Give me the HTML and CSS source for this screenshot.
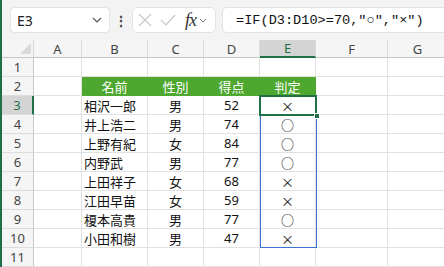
FILE: index.html
```html
<!DOCTYPE html>
<html lang="ja">
<head>
    <meta charset="utf-8">
    <title>IF 判定</title>
    <link rel="stylesheet" href="styles.css">
</head>
<body>
    <div class="window">
        <div class="toolbar">
            <div class="name-box">
                <span>E3</span>
                <svg class="chev" width="10" height="6" viewBox="0 0 10 6"><path d="M1 1l4 4 4-4" fill="none" stroke="#555" stroke-width="1.2"/></svg>
            </div>
            <div class="dots">⋮</div>
            <div class="fx-box">
                <svg width="14" height="14" viewBox="0 0 14 14"><path d="M1 1l12 12M13 1L1 13" stroke="#c8c8c8" stroke-width="1.2"/></svg>
                <svg width="16" height="14" viewBox="0 0 16 14"><path d="M1 7l5 5L15 2" fill="none" stroke="#c8c8c8" stroke-width="1.2"/></svg>
                <span class="fx">fx</span>
                <svg width="8" height="5" viewBox="0 0 8 5"><path d="M1 1l3 3 3-3" fill="none" stroke="#777" stroke-width="1"/></svg>
            </div>
            <div class="formula">=IF(D3:D10&gt;=70,"○","×")</div>
        </div>

        <div class="sheet">
            <div class="corner"><span class="tri"></span></div>
            <div class="col-h">A</div>
            <div class="col-h">B</div>
            <div class="col-h">C</div>
            <div class="col-h">D</div>
            <div class="col-h active">E</div>
            <div class="col-h">F</div>
            <div class="col-h">G</div>

            <div class="row-h">1</div>
            <div class="cell"></div><div class="cell"></div><div class="cell"></div><div class="cell"></div><div class="cell"></div><div class="cell"></div><div class="cell"></div>

            <div class="row-h">2</div>
            <div class="cell"></div>
            <div class="cell head">名前</div>
            <div class="cell head">性別</div>
            <div class="cell head">得点</div>
            <div class="cell head">判定</div>
            <div class="cell"></div><div class="cell"></div>

            <div class="row-h active">3</div>
            <div class="cell"></div>
            <div class="cell name">相沢一郎</div>
            <div class="cell mid">男</div>
            <div class="cell mid">52</div>
            <div class="cell mid mark selected">×<span class="spill"></span><span class="frame"><span class="handle"></span></span></div>
            <div class="cell"></div><div class="cell"></div>

            <div class="row-h">4</div>
            <div class="cell"></div>
            <div class="cell name">井上浩二</div>
            <div class="cell mid">男</div>
            <div class="cell mid">74</div>
            <div class="cell mid mark">○</div>
            <div class="cell"></div><div class="cell"></div>

            <div class="row-h">5</div>
            <div class="cell"></div>
            <div class="cell name">上野有紀</div>
            <div class="cell mid">女</div>
            <div class="cell mid">84</div>
            <div class="cell mid mark">○</div>
            <div class="cell"></div><div class="cell"></div>

            <div class="row-h">6</div>
            <div class="cell"></div>
            <div class="cell name">内野武</div>
            <div class="cell mid">男</div>
            <div class="cell mid">77</div>
            <div class="cell mid mark">○</div>
            <div class="cell"></div><div class="cell"></div>

            <div class="row-h">7</div>
            <div class="cell"></div>
            <div class="cell name">上田祥子</div>
            <div class="cell mid">女</div>
            <div class="cell mid">68</div>
            <div class="cell mid mark">×</div>
            <div class="cell"></div><div class="cell"></div>

            <div class="row-h">8</div>
            <div class="cell"></div>
            <div class="cell name">江田早苗</div>
            <div class="cell mid">女</div>
            <div class="cell mid">59</div>
            <div class="cell mid mark">×</div>
            <div class="cell"></div><div class="cell"></div>

            <div class="row-h">9</div>
            <div class="cell"></div>
            <div class="cell name">榎本高貴</div>
            <div class="cell mid">男</div>
            <div class="cell mid">77</div>
            <div class="cell mid mark">○</div>
            <div class="cell"></div><div class="cell"></div>

            <div class="row-h">10</div>
            <div class="cell"></div>
            <div class="cell name">小田和樹</div>
            <div class="cell mid">男</div>
            <div class="cell mid">47</div>
            <div class="cell mid mark">×</div>
            <div class="cell"></div><div class="cell"></div>

            <div class="row-h">11</div>
            <div class="cell"></div><div class="cell"></div><div class="cell"></div><div class="cell"></div><div class="cell"></div><div class="cell"></div><div class="cell"></div>
        </div>
    </div>
</body>
</html>
```

FILE: styles.css
```css
* {
    margin: 0;
    padding: 0;
    box-sizing: border-box;
}

body {
    width: 444px;
    height: 267px;
    overflow: hidden;
    background: #ffffff;
    font-family: "Noto Sans", "Noto Sans CJK JP", sans-serif;
    color: #222;
}

.window {
    border-left: 2px solid #1e7145;
    height: 267px;
    overflow: hidden;
}

/* formula bar */
.toolbar {
    height: 40px;
    background: #f3f3f3;
    display: flex;
    align-items: center;
    padding-left: 8px;
}

.name-box {
    width: 100px;
    height: 26px;
    background: #fff;
    border: 1px solid #e3e3e3;
    border-radius: 5px;
    display: flex;
    align-items: center;
    justify-content: space-between;
    padding: 0 7px 0 6px;
    font-size: 14px;
    color: #222;
}

.dots {
    width: 22px;
    text-align: center;
    font-size: 14px;
    color: #444;
    font-weight: bold;
}

.fx-box {
    width: 84px;
    height: 26px;
    background: #fff;
    border: 1px solid #e3e3e3;
    border-radius: 5px;
    display: flex;
    align-items: center;
    gap: 8px;
    padding: 0 4px 0 5px;
}

.fx {
    font-family: "Liberation Serif", serif;
    font-style: italic;
    font-size: 18px;
    color: #333;
    margin-left: 1px;
    margin-right: -5px;
    letter-spacing: -1px;
}

.formula {
    flex: 1;
    height: 26px;
    margin-left: 6px;
    background: #fff;
    border: 1px solid #e3e3e3;
    border-right: none;
    border-radius: 5px 0 0 5px;
    display: flex;
    align-items: center;
    padding-left: 13px;
    font-family: "Liberation Mono", monospace;
    font-size: 13.6px;
    color: #111;
    white-space: nowrap;
}

/* grid */
.sheet {
    display: grid;
    grid-template-columns: 32px 48px 66px 56px 56px 56px 72px 60px;
    grid-template-rows: 18px repeat(11, 19px);
    font-size: 13px;
}

.corner {
    background: #f5f5f5;
    border-right: 1px solid #d6d6d6;
    border-bottom: 1px solid #c8c8c8;
    position: relative;
}

.tri {
    position: absolute;
    right: 2px;
    bottom: 3px;
    width: 0;
    height: 0;
    border-left: 11px solid transparent;
    border-bottom: 11px solid #dadada;
}

.col-h {
    background: #f5f5f5;
    border-right: 1px solid #dcdcdc;
    border-bottom: 1px solid #c8c8c8;
    display: flex;
    align-items: center;
    justify-content: center;
    color: #444;
    font-size: 13px;
}

.col-h.active {
    background: #d4d4d4;
    color: #1e7145;
    border-bottom: 2px solid #1e7145;
}

.row-h {
    background: #f5f5f5;
    border-right: 1px solid #c8c8c8;
    border-bottom: 1px solid #dcdcdc;
    display: flex;
    align-items: center;
    justify-content: center;
    color: #444;
    font-size: 13px;
}

.row-h.active {
    background: #d4d4d4;
    color: #1e7145;
    border-right: 2px solid #1e7145;
}

.cell {
    border-right: 1px solid #e1e1e1;
    border-bottom: 1px solid #e1e1e1;
    display: flex;
    align-items: center;
    white-space: nowrap;
    color: #111;
}

.cell.head {
    background: #4ea72e;
    border-color: #4ea72e;
    color: #fff;
    justify-content: center;
}

.cell.name {
    padding-left: 2px;
}

.cell.mid {
    justify-content: center;
}

.mark {
    font-family: "Noto Sans CJK JP", sans-serif;
    font-size: 13px;
}

.selected {
    position: relative;
}

.spill {
    position: absolute;
    left: 0;
    top: -1px;
    width: 57px;
    height: 153px;
    border: 1px solid #3a73d0;
}

.frame {
    position: absolute;
    left: -1px;
    top: -1px;
    width: 58px;
    height: 21px;
    border: 2px solid #1e7145;
}

.handle {
    position: absolute;
    right: -5px;
    bottom: -5px;
    width: 6px;
    height: 6px;
    background: #1e7145;
    border: 1px solid #fff;
}
```
